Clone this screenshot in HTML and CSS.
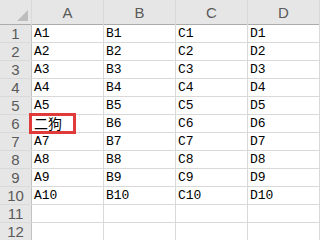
FILE: index.html
```html
<!DOCTYPE html>
<html lang="zh">

<head>
    <meta charset="UTF-8">
    <title>Sheet1</title>
    <link rel="stylesheet" href="styles.css">
</head>

<body>
    <div class="sheet">
        <div class="corner"><span class="tri"></span></div>
        <div class="col-head">A</div>
        <div class="col-head">B</div>
        <div class="col-head">C</div>
        <div class="col-head">D</div>

        <div class="row-head">1</div><div class="cell">A1</div><div class="cell">B1</div><div class="cell">C1</div><div class="cell">D1</div>
        <div class="row-head">2</div><div class="cell">A2</div><div class="cell">B2</div><div class="cell">C2</div><div class="cell">D2</div>
        <div class="row-head">3</div><div class="cell">A3</div><div class="cell">B3</div><div class="cell">C3</div><div class="cell">D3</div>
        <div class="row-head">4</div><div class="cell">A4</div><div class="cell">B4</div><div class="cell">C4</div><div class="cell">D4</div>
        <div class="row-head">5</div><div class="cell">A5</div><div class="cell">B5</div><div class="cell">C5</div><div class="cell">D5</div>
        <div class="row-head">6</div><div class="cell marked"><span class="cn">二狗</span><span class="mark"></span></div><div class="cell">B6</div><div class="cell">C6</div><div class="cell">D6</div>
        <div class="row-head">7</div><div class="cell">A7</div><div class="cell">B7</div><div class="cell">C7</div><div class="cell">D7</div>
        <div class="row-head">8</div><div class="cell">A8</div><div class="cell">B8</div><div class="cell">C8</div><div class="cell">D8</div>
        <div class="row-head">9</div><div class="cell">A9</div><div class="cell">B9</div><div class="cell">C9</div><div class="cell">D9</div>
        <div class="row-head">10</div><div class="cell">A10</div><div class="cell">B10</div><div class="cell">C10</div><div class="cell">D10</div>
        <div class="row-head">11</div><div class="cell"></div><div class="cell"></div><div class="cell"></div><div class="cell"></div>
        <div class="row-head">12</div><div class="cell"></div><div class="cell"></div><div class="cell"></div><div class="cell"></div>
    </div>
</body>

</html>
```

FILE: styles.css
```css
body {
    margin: 0;
    background: #fff;
    font-family: "Liberation Sans", Arial, sans-serif;
}

.sheet {
    display: grid;
    grid-template-columns: 31px repeat(4, 71px);
    grid-template-rows: 24px repeat(12, 17px);
    gap: 1px;
    width: 320px;
    background: #d9d9d9;
}

.corner,
.col-head,
.row-head {
    background: #e6e6e6;
    color: #5a5a5a;
    font-size: 15px;
    display: flex;
    align-items: center;
    justify-content: center;
}

.col-head {
    border-bottom: 1px solid #ababab;
    margin-bottom: -1px;
}

.row-head {
    border-right: 1px solid #c2c2c2;
    margin-right: -1px;
    font-size: 15px;
}

.corner {
    position: relative;
    border-bottom: 1px solid #ababab;
    margin-bottom: -1px;
}

.tri {
    position: absolute;
    right: 3px;
    bottom: 3px;
    width: 0;
    height: 0;
    border-left: 11px solid transparent;
    border-bottom: 11px solid #bdbdbd;
}

.cell {
    background: #fff;
    font-family: "Liberation Mono", "Courier New", monospace;
    font-size: 13px;
    line-height: 17px;
    padding-left: 2px;
    color: #000;
}

.marked {
    position: relative;
}

.cn {
    font-family: "Noto Sans CJK SC", sans-serif;
    font-size: 14px;
    line-height: 17px;
}

.mark {
    position: absolute;
    left: -3px;
    top: -2px;
    width: 41px;
    height: 15px;
    border: 3px solid #e03a3a;
}
```
